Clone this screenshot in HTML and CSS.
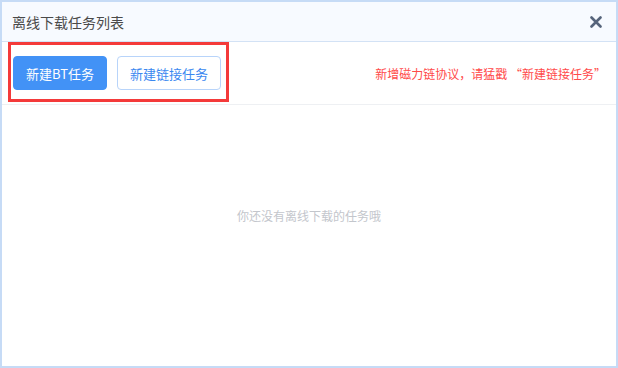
FILE: index.html
```html
<!DOCTYPE html>
<html lang="zh-CN">
<head>
    <meta charset="UTF-8">
    <title>离线下载任务列表</title>
    <link rel="stylesheet" href="styles.css">
</head>
<body>
    <div class="dialog">
        <div class="dialog-header">
            <span class="dialog-title">离线下载任务列表</span>
            <span class="dialog-close">
                <svg width="12" height="12" viewBox="0 0 12 12">
                    <path d="M1.5 1.5 L10.5 10.5 M10.5 1.5 L1.5 10.5" stroke="#56647b" stroke-width="2.6" stroke-linecap="round"/>
                </svg>
            </span>
        </div>

        <div class="toolbar">
            <div class="toolbar-btns">
                <button class="btn btn-primary">新建BT任务</button>
                <button class="btn btn-plain">新建链接任务</button>
            </div>
            <div class="notice">新增磁力链协议，请猛戳 “新建链接任务”</div>
        </div>

        <div class="task-list">
            <p class="empty">你还没有离线下载的任务哦</p>
        </div>

        <!-- 标注框 -->
        <div class="highlight"></div>
    </div>
</body>
</html>
```

FILE: styles.css
```css
body {
    margin: 0;
    font-family: "Noto Sans CJK SC", "Liberation Sans", sans-serif;
    background: #fff;
}
.dialog {
    position: relative;
    width: 618px;
    height: 368px;
    box-sizing: border-box;
    border: 2px solid #c6dbf6;
    background: #fff;
}
.dialog-header {
    height: 39px;
    display: flex;
    align-items: center;
    justify-content: space-between;
    padding: 0 14px 0 10px;
    background: #f7faff;
    border-bottom: 1px solid #d3e2f5;
}
.dialog-title {
    font-size: 14px;
    color: #4a4a4a;
}
.dialog-close {
    display: flex;
    padding-top: 1px;
}
.toolbar {
    height: 62px;
    display: flex;
    align-items: center;
    justify-content: space-between;
    padding: 0 10px 0 11px;
    border-bottom: 1px solid #eef0f3;
}
.toolbar-btns {
    display: flex;
    gap: 10px;
}
.btn {
    height: 34px;
    font-family: inherit;
    font-size: 13px;
    border-radius: 4px;
    cursor: pointer;
    padding: 0;
}
.btn-primary {
    width: 94px;
    background: #4292f6;
    border: 1px solid #4292f6;
    color: #fff;
}
.btn-plain {
    width: 104px;
    background: #fff;
    border: 1px solid #b8d4fa;
    color: #3b88f0;
}
.notice {
    font-size: 12px;
    color: #ff4a4a;
}
.task-list {
    padding-top: 102px;
}
.empty {
    margin: 0;
    text-align: center;
    font-size: 12px;
    line-height: 18px;
    color: #c3c6cc;
}
.highlight {
    position: absolute;
    left: 6px;
    top: 40px;
    width: 221px;
    height: 60px;
    box-sizing: border-box;
    border: 3px solid #f43a3a;
}
```
